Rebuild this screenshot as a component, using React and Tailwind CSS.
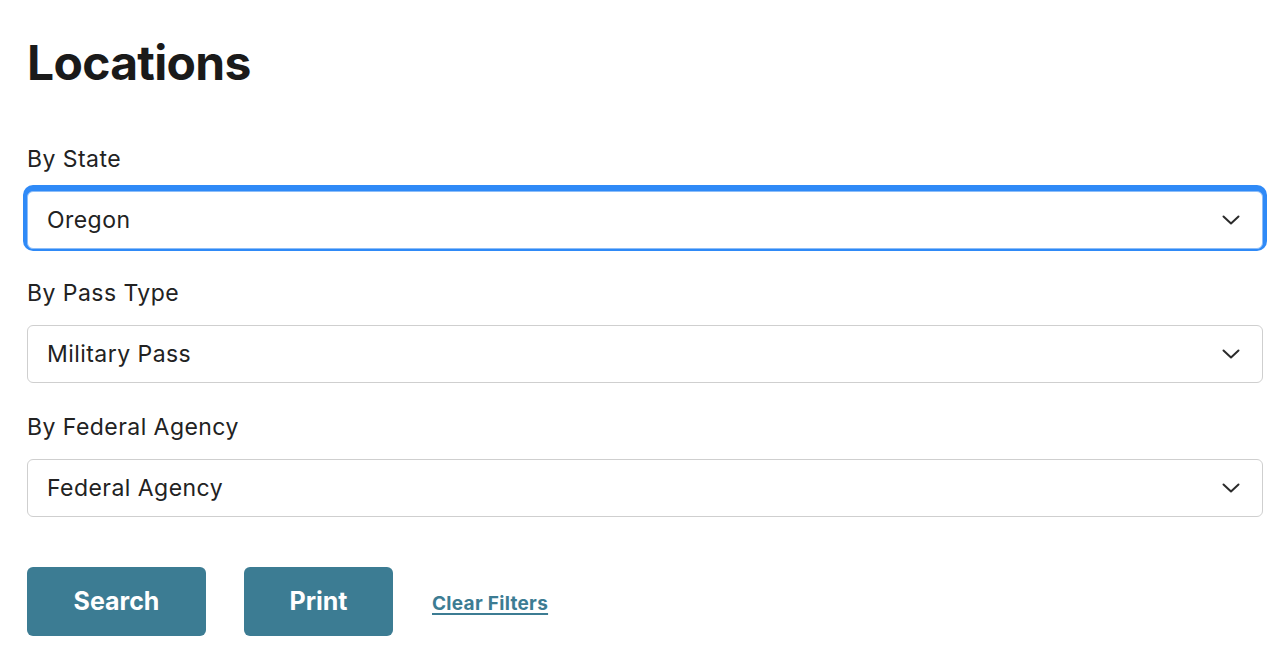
import { useState } from "react";

const Chevron = () => (
  <svg width="18" height="10" viewBox="0 0 18 10" fill="none" className="shrink-0">
    <polyline
      points="1.5,1.5 9,8.5 16.5,1.5"
      stroke="#2b2b2b"
      strokeWidth="2"
      strokeLinecap="round"
      strokeLinejoin="round"
    />
  </svg>
);

const FilterSelect = ({ label, value, focused, onFocus }) => (
  <div className="flex flex-col">
    <div className="text-[23px] leading-[33px] tracking-[0.45px] text-[#222]">{label}</div>
    <div
      role="button"
      tabIndex={0}
      onClick={onFocus}
      className={`mt-[15px] h-[58px] flex items-center justify-between pl-[19px] pr-[22px] rounded-[6px] bg-white border text-[23px] tracking-[0.45px] text-[#222] cursor-pointer ${
        focused
          ? "border-[#8dbdf8] shadow-[0_-2px_0_4px_#2f8af7]"
          : "border-[#cfcfcf]"
      }`}
    >
      <span>{value}</span>
      <Chevron />
    </div>
  </div>
);

export default function App() {
  const [focused, setFocused] = useState("state");

  const fields = [
    { id: "state", label: "By State", value: "Oregon" },
    { id: "pass", label: "By Pass Type", value: "Military Pass" },
    { id: "agency", label: "By Federal Agency", value: "Federal Agency" },
  ];

  return (
    <div
      className="min-h-[670px] bg-white pl-[27px] pr-[17px]"
      style={{ fontFamily: "Inter, 'Noto Sans', sans-serif" }}
    >
      <h1 className="pt-[39px] text-[48px] leading-[48px] font-bold text-[#1a1a1a] tracking-[-0.7px]">
        Locations
      </h1>

      <div className="mt-[56px] flex flex-col gap-[28px]">
        {fields.map((f) => (
          <FilterSelect
            key={f.id}
            label={f.label}
            value={f.value}
            focused={focused === f.id}
            onFocus={() => setFocused(f.id)}
          />
        ))}
      </div>

      <div className="mt-[50px] flex items-center">
        <button className="w-[179px] h-[69px] rounded-[6px] bg-[#3c7c93] text-white text-[25px] font-bold">
          Search
        </button>
        <button className="ml-[38px] w-[149px] h-[69px] rounded-[6px] bg-[#3c7c93] text-white text-[25px] font-bold">
          Print
        </button>
        <a
          href="#"
          className="ml-[39px] mt-[6px] text-[19px] tracking-[0.3px] font-bold text-[#3c7c93] underline underline-offset-[3px] decoration-2"
        >
          Clear Filters
        </a>
      </div>
    </div>
  );
}
